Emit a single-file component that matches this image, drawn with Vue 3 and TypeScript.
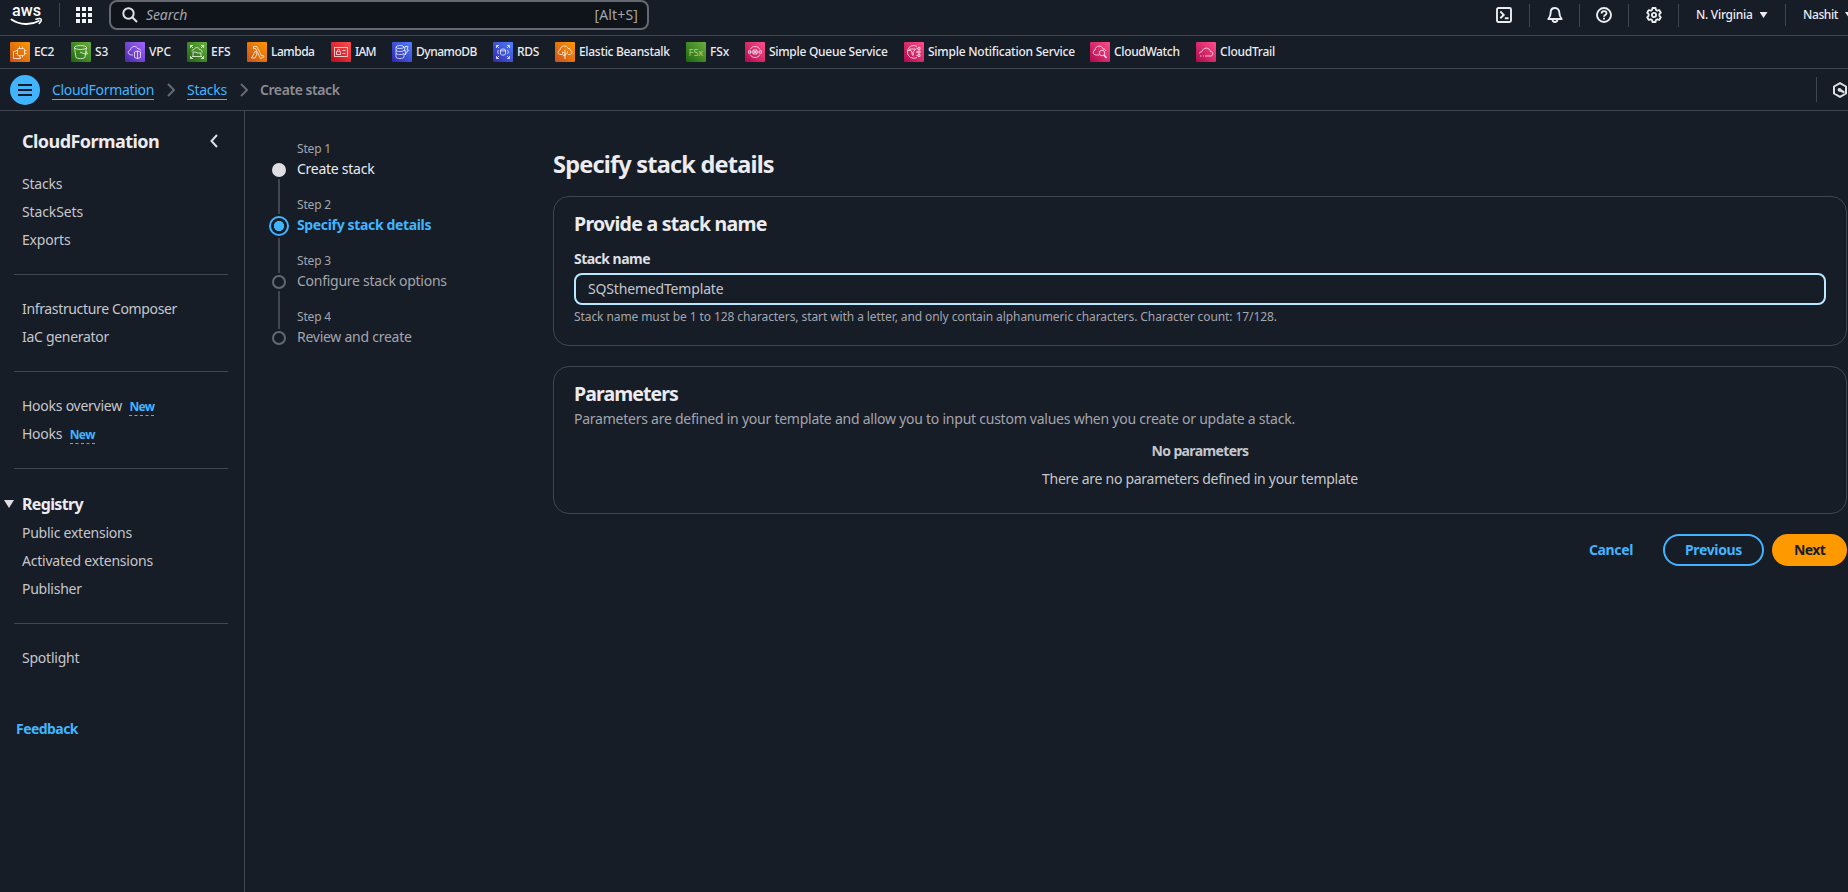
<script setup lang="ts">
interface Favorite {
  name: string
  tone: string
  icon: string
  width: number
  tracking: number
}

interface NavItem {
  label: string
  tracking: number
  isNew?: boolean
}

interface Step {
  title: string
  state: 'done' | 'active' | 'todo'
}

// width: full slot of the shortcut, up to the start of the next one
const favorites: Favorite[] = [
  { name: 'EC2', tone: 'orange', icon: 'ec2', width: 61, tracking: -0.39 },
  { name: 'S3', tone: 'green', icon: 's3', width: 54, tracking: -0.2 },
  { name: 'VPC', tone: 'purple', icon: 'vpc', width: 62, tracking: -0.1 },
  { name: 'EFS', tone: 'green', icon: 'efs', width: 60, tracking: -0.04 },
  { name: 'Lambda', tone: 'orange', icon: 'lambda', width: 84, tracking: -0.48 },
  { name: 'IAM', tone: 'red', icon: 'iam', width: 61, tracking: -0.8 },
  { name: 'DynamoDB', tone: 'blue', icon: 'dynamo', width: 101, tracking: -0.48 },
  { name: 'RDS', tone: 'blue', icon: 'rds', width: 62, tracking: -0.3 },
  { name: 'Elastic Beanstalk', tone: 'orange', icon: 'beanstalk', width: 131, tracking: -0.31 },
  { name: 'FSx', tone: 'green', icon: 'fsx', width: 59, tracking: -0.1 },
  { name: 'Simple Queue Service', tone: 'pink', icon: 'sqs', width: 159, tracking: -0.28 },
  { name: 'Simple Notification Service', tone: 'pink', icon: 'sns', width: 186, tracking: -0.24 },
  { name: 'CloudWatch', tone: 'pink', icon: 'cloudwatch', width: 106, tracking: -0.35 },
  { name: 'CloudTrail', tone: 'pink', icon: 'cloudtrail', width: 100, tracking: -0.24 },
]

const groupA: NavItem[] = [
  { label: 'Stacks', tracking: -0.2 },
  { label: 'StackSets', tracking: -0.13 },
  { label: 'Exports', tracking: -0.2 },
]
const groupB: NavItem[] = [
  { label: 'Infrastructure Composer', tracking: -0.35 },
  { label: 'IaC generator', tracking: -0.3 },
]
const groupC: NavItem[] = [
  { label: 'Hooks overview', tracking: -0.25, isNew: true },
  { label: 'Hooks', tracking: -0.25, isNew: true },
]
const registry: NavItem[] = [
  { label: 'Public extensions', tracking: -0.25 },
  { label: 'Activated extensions', tracking: -0.22 },
  { label: 'Publisher', tracking: -0.25 },
]

const steps: Step[] = [
  { title: 'Create stack', state: 'done' },
  { title: 'Specify stack details', state: 'active' },
  { title: 'Configure stack options', state: 'todo' },
  { title: 'Review and create', state: 'todo' },
]
</script>

<template>
  <div class="console">
    <header class="topbar">
      <svg class="aws" width="36" height="28" viewBox="0 0 36 28">
        <text x="2" y="16" class="aws-word" textLength="29" lengthAdjust="spacingAndGlyphs">aws</text>
        <path d="M1.500 19.500c8.500 5.800 19.500 5.800 27.300 1.500" fill="none" stroke="#fff" stroke-width="1.900" stroke-linecap="round" />
        <path d="M26 19.300c2.400-.8 4.700-.8 5.100-.2.400.8-.5 3-1.900 4.400" fill="none" stroke="#fff" stroke-width="1.500" stroke-linecap="round" />
      </svg>
      <span class="rule logo-rule"></span>
      <svg class="apps" width="16" height="16" viewBox="0 0 16 16" fill="#f3f3f7">
        <template v-for="r in 3" :key="r">
          <rect v-for="c in 3" :key="c" :x="(c - 1) * 6" :y="(r - 1) * 6" width="4" height="4" />
        </template>
      </svg>
      <div class="search">
        <svg width="16" height="16" viewBox="0 0 16 16" fill="none" stroke="#dedee3" stroke-width="2">
          <circle cx="6.500" cy="6.500" r="5.200" />
          <path d="M10.300 10.300 15 15" />
        </svg>
        <em>Search</em>
        <span class="keys">[Alt+S]</span>
      </div>
      <div class="tools">
        <span class="tool"><svg viewBox="0 0 16 16"><rect x="1" y="1" width="14" height="14" rx="1.500" /><path d="m4.300 4.500 3.400 3.400-3.400 3.300M8.800 11.200h3.800" /></svg></span>
        <span class="tool"><svg viewBox="0 0 16 16"><path d="M8 1C5.300 1 3.700 3 3.700 5.500 3.700 8.700 3 10 1.300 12h13.400c-1.700-2-2.400-3.300-2.400-6.500C12.300 3 10.700 1 8 1Z" stroke-linejoin="round" /><path d="M5.500 12.500a2.500 2.500 0 0 0 5 0" /></svg></span>
        <span class="tool"><svg viewBox="0 0 16 16"><circle cx="8" cy="8" r="7" /><path d="M5.600 6.500C5.600 3.300 10.500 3.400 10.500 6.200 10.500 8 8 7.900 8 9.700M8 10.700v1.800" /></svg></span>
        <span class="tool"><svg viewBox="0 0 16 16"><path d="M6.500 1h3l.5 2 1.200.7 2-.6 1.600 2.600L13.400 7.200v1.600l1.400 1.500-1.600 2.600-2-.6-1.200.7-.5 2h-3L6 13l-1.200-.7-2 .6-1.600-2.600 1.400-1.500V7.200L1.200 5.700l1.600-2.600 2 .6L6 3Z" stroke-linejoin="round" /><circle cx="8" cy="8" r="2.100" /></svg></span>
        <span class="menu region">N. Virginia<i class="caret"></i></span>
        <span class="menu user">Nashit<i class="caret"></i></span>
      </div>
    </header>

    <nav class="favorites">
      <a v-for="f in favorites" :key="f.name" class="fav" :style="{ width: f.width + 'px', letterSpacing: f.tracking + 'px' }">
        <span class="tile" :class="f.tone">
          <svg viewBox="0 0 20 20">
            <g v-if="f.icon === 'ec2'"><rect x="7.500" y="6.500" width="7" height="7" rx="1" /><path d="M9.500 4.500v2M12.500 4.500v2M9.500 13.500v2M12.500 13.500v2M5.500 8.500h2M5.500 11.500h2M14.500 8.500h2M14.500 11.500h2M5.500 9.500h-2v7h7v-2" /></g>
            <g v-else-if="f.icon === 's3'"><ellipse cx="9.500" cy="5.500" rx="6" ry="2" /><path d="m3.500 5.500 1.500 10c1.500 1.500 7.500 1.500 9 0l1.500-10M9 10c3 1.500 7.500 3 7.500 1.500 0-.8-1-1.500-2-2" /></g>
            <g v-else-if="f.icon === 'vpc'"><path d="M8 13H6.500C2 12.500 2.500 8.500 5.500 8c.5-4.500 6.500-4.500 7.500-1 1.500-.5 2.500.5 2.500 1.500M9.500 10l3-1 3 1v5.500l-3 1-3-1ZM12.500 9v7.500" /></g>
            <g v-else-if="f.icon === 'efs'"><path d="M3.500 6V3.500H6M3.500 3.500 6 6M14 3.500h2.500V6M16.500 3.500 14 6M3.500 14v2.500H6M3.500 16.500 6 14M14 16.500h2.500V14M16.500 16.500 14 14M6 10h3l1 1h4v3.500H6ZM5 9.500C4.500 7.500 7 7.500 7 7.500c1-2.500 5-2.500 5.500 0 2 0 3 1.500 2.500 3" /></g>
            <g v-else-if="f.icon === 'lambda'"><path d="M6.500 4.500h3.300l4.800 9.500 1.700-.6.7 1.600-3.500 1.500L8.500 6.500h-2ZM8.500 9 10 12l-2 4H4.500Z" /></g>
            <g v-else-if="f.icon === 'iam'"><rect x="3.500" y="5.500" width="13" height="9" /><path d="M5.500 9.500h4v3h-4ZM6.500 9V8c0-1 2-1 2 0v1M11.500 8.500h3M11.500 11.500h3" /></g>
            <g v-else-if="f.icon === 'dynamo'"><ellipse cx="8" cy="5" rx="4" ry="1.500" /><path d="M4 5v10c0 2 8 2 8 0v-3M4 8c0 2 8 2 8 0M4 11c0 2 8 2 8 0M12 5v1M13 4.500h3l-1 3.500h1.500L13 13l1-4h-1.500Z" /></g>
            <g v-else-if="f.icon === 'rds'"><path d="M3.500 6V3.500H6M3.500 3.500 6 6M14 3.500h2.500V6M16.500 3.500 14 6M3.500 14v2.500H6M3.500 16.500 6 14M14 16.500h2.500V14M16.500 16.500 14 14M5.500 8c-1 1.500-1 2.500 0 4M14.500 8c1 1.500 1 2.500 0 4" /><ellipse cx="10" cy="8" rx="2.500" ry="1" /><path d="M7.500 8v4c0 1.500 5 1.500 5 0V8" /></g>
            <g v-else-if="f.icon === 'beanstalk'"><path d="M7 12.500H6C2 12.500 2.500 8.500 5 8c.5-5 7-5 8-1.500 1.500-.5 2 .5 2 1.500 3 1 2.500 4.500-.5 4.500H13M10 7.500V17M10 14c-2.500 0-2.500-2-2.500-4 2.500 0 2.500 2 2.500 4ZM10 12.500c2.500 0 2.500-2 2.500-3.500" /></g>
            <text v-else-if="f.icon === 'fsx'" x="2.800" y="14" class="fsx-word" textLength="14.200" lengthAdjust="spacingAndGlyphs">FSx</text>
            <g v-else-if="f.icon === 'sqs'"><path d="M5 7.500c2-4 8-4 10 0M5 12.500c2 4 8 4 10 0M3.500 8.800h2v2.400h-2ZM14.500 8.800h2v2.400h-2ZM8 8h4v4H8ZM8 8l4 4M12 8l-4 4M5.500 10H8M12 10h2.500" /></g>
            <g v-else-if="f.icon === 'sns'"><path d="M13 4.500C8 2 3.500 5 3.500 10s5 7.500 9.500 5.500M3.500 8.500h3M5.500 7h6l-2.300 3v3.500l-1.200-1V10ZM14 5.500h2v2h-2ZM14 9h2v2h-2ZM14 12.500h2v2h-2ZM12.500 6.500H14M12 10h2M12.500 13.500H14" /></g>
            <g v-else-if="f.icon === 'cloudwatch'"><path d="M9 13H6.500C2.500 13 2.500 9 5 8c.5-5 7.500-5 8-1 2-.3 3 1 2.500 2" /><circle cx="12" cy="11" r="2.800" /><path d="m14 13 2.500 3" stroke-width="1.500" /></g>
            <g v-else><path d="M9 14h6c2.500-.5 2.500-4-.5-4.500C13.500 5 7 5 6 9.500c-1.500.3-2.500 1-2.500 2M4 14h1.500M7 14h.8" /></g>
          </svg>
        </span>
        <span class="fav-name">{{ f.name }}</span>
      </a>
    </nav>

    <div class="crumbs">
      <button class="burger" type="button"><i></i><i></i><i></i></button>
      <a class="crumb link first">CloudFormation</a>
      <svg class="sep" width="8" height="14" viewBox="0 0 8 14"><path d="m1 1 6 6-6 6" /></svg>
      <a class="crumb link second">Stacks</a>
      <svg class="sep" width="8" height="14" viewBox="0 0 8 14"><path d="m1 1 6 6-6 6" /></svg>
      <span class="crumb current">Create stack</span>
      <span class="assist">
        <svg width="16" height="16" viewBox="0 0 16 16"><path d="M8 1.100 14 4.500v7L8 14.900 2 11.500v-7Z" fill="none" stroke="#dedee3" stroke-width="2" stroke-linejoin="round" /><path d="M7 7.500 11.500 10" stroke="#dedee3" stroke-width="2.500" stroke-linecap="round" /><circle cx="7.600" cy="7.800" r="1.900" fill="#dedee3" /></svg>
      </span>
    </div>

    <div class="body">
      <aside class="sidebar">
        <div class="side-head">
          <h2>CloudFormation</h2>
          <svg width="8" height="14" viewBox="0 0 8 14"><path d="M7 1 1.500 7 7 13" fill="none" stroke="#dedee3" stroke-width="2" /></svg>
        </div>
        <ul class="links">
          <li v-for="n in groupA" :key="n.label"><span :style="{ letterSpacing: n.tracking + 'px' }">{{ n.label }}</span></li>
        </ul>
        <hr />
        <ul class="links">
          <li v-for="n in groupB" :key="n.label"><span :style="{ letterSpacing: n.tracking + 'px' }">{{ n.label }}</span></li>
        </ul>
        <hr />
        <ul class="links">
          <li v-for="n in groupC" :key="n.label">
            <span :style="{ letterSpacing: n.tracking + 'px' }">{{ n.label }}</span><b v-if="n.isNew" class="new">New</b>
          </li>
        </ul>
        <hr />
        <h3 class="section"><i class="caret big"></i>Registry</h3>
        <ul class="links">
          <li v-for="n in registry" :key="n.label"><span :style="{ letterSpacing: n.tracking + 'px' }">{{ n.label }}</span></li>
        </ul>
        <hr />
        <ul class="links"><li>Spotlight</li></ul>
        <a class="feedback">Feedback</a>
      </aside>

      <ol class="steps">
        <li v-for="(s, i) in steps" :key="s.title" :class="s.state">
          <div class="rail"><span class="dot"></span><span v-if="i < steps.length - 1" class="line"></span></div>
          <div class="step-text">
            <small>Step {{ i + 1 }}</small>
            <span class="step-title">{{ s.title }}</span>
          </div>
        </li>
      </ol>

      <main class="content">
        <h1>Specify stack details</h1>
        <section class="card name-card">
          <h2>Provide a stack name</h2>
          <label class="label" for="stack">Stack name</label>
          <input id="stack" class="field" value="SQSthemedTemplate" />
          <p class="hint">Stack name must be 1 to 128 characters, start with a letter, and only contain alphanumeric characters. Character count: 17/128.</p>
        </section>
        <section class="card params-card">
          <h2 class="params-title">Parameters</h2>
          <p class="desc">Parameters are defined in your template and allow you to input custom values when you create or update a stack.</p>
          <p class="empty-title">No parameters</p>
          <p class="empty-text">There are no parameters defined in your template</p>
        </section>
        <div class="actions">
          <button type="button" class="btn cancel">Cancel</button>
          <button type="button" class="btn previous">Previous</button>
          <button type="button" class="btn next">Next</button>
        </div>
      </main>
    </div>
  </div>
</template>

<style>
html,
body {
  background: #161d26;
  overflow: hidden;
}
</style>

<style scoped>
.console {
  display: flex;
  flex-direction: column;
  width: 1848px;
  height: 892px;
  overflow: hidden;
  background: #161d26;
  color: #c6c6cd;
  font: 400 14px/20px 'Noto Sans', 'Open Sans', sans-serif;
}
.console * {
  box-sizing: border-box;
}
h1, h2, h3, p, ul, ol {
  margin: 0;
  padding: 0;
  list-style: none;
}

/* top bar */
.topbar {
  display: flex;
  flex: none;
  height: 36px;
  border-bottom: 1px solid #424650;
}
.aws {
  flex: none;
  margin: 0 0 0 10px;
}
.aws-word {
  fill: #fff;
  font: 500 17px Roboto, 'Noto Sans', sans-serif;
}
.rule {
  flex: none;
  width: 1px;
  background: #424650;
}
.logo-rule {
  height: 24px;
  margin: 3px 0 0 13px;
}
.apps {
  flex: none;
  margin: 7px 0 0 16px;
}
.search {
  display: flex;
  flex: none;
  align-items: center;
  width: 540px;
  height: 30px;
  margin-left: 17px;
  padding: 0 9px 0 11px;
  border: 2px solid #656871;
  border-radius: 8px;
  background: #0f141a;
  color: #a4a4ad;
}
.search em {
  margin-left: 8px;
  letter-spacing: -0.1px;
}
.keys {
  margin-left: auto;
  letter-spacing: 0.14px;
}
.tools {
  display: flex;
  flex: none;
  align-items: center;
  height: 30px;
  margin-left: 830px;
}
.tool {
  display: flex;
  flex: none;
  align-items: center;
  justify-content: center;
  width: 50px;
  height: 23px;
  border-right: 1px solid #424650;
}
.tool:first-child {
  width: 51px;
}
.tool:nth-child(3) {
  width: 49px;
}
.tool svg {
  width: 16px;
  height: 16px;
  fill: none;
  stroke: #ebebf0;
  stroke-width: 1.9;
}
.menu {
  display: flex;
  flex: none;
  align-items: center;
  height: 22px;
  color: #ebebf0;
  font-size: 12px;
  font-weight: 500;
  letter-spacing: -0.28px;
}
.region {
  width: 107px;
  padding-left: 17px;
  border-right: 1px solid #424650;
}
.user {
  padding-left: 17px;
  letter-spacing: -0.4px;
}
.caret {
  width: 8px;
  height: 6px;
  margin-left: 7px;
  background: #ebebf0;
  clip-path: polygon(0 0, 100% 0, 50% 100%);
}

/* favorites */
.favorites {
  display: flex;
  flex: none;
  align-items: center;
  height: 33px;
  padding: 0 0 1px 10px;
  border-bottom: 1px solid #424650;
}
.fav {
  display: flex;
  flex: none;
  align-items: center;
  gap: 4px;
  color: #ebebf0;
  font-size: 12px;
  font-weight: 500;
  white-space: nowrap;
}
.tile {
  width: 20px;
  height: 20px;
  border-radius: 1px;
}
.tile svg {
  display: block;
  width: 20px;
  height: 20px;
  fill: none;
  stroke: #fff;
  stroke-width: 0.8;
  stroke-opacity: 0.9;
}
.tile .fsx-word {
  fill: #d8ecc8;
  stroke: none;
  font: 300 9.5px 'Noto Sans', sans-serif;
  letter-spacing: 0;
}
.orange { background: linear-gradient(45deg, #c8511b, #ff9900); }
.green { background: linear-gradient(45deg, #1b660f, #6cae3e); }
.purple { background: linear-gradient(45deg, #4d27a8, #a166ff); }
.red { background: linear-gradient(45deg, #bd0816, #ff5252); }
.blue { background: linear-gradient(45deg, #2e27ad, #527fff); }
.pink { background: linear-gradient(45deg, #b0084d, #ff4f8b); }

/* breadcrumbs */
.crumbs {
  display: flex;
  flex: none;
  align-items: center;
  height: 42px;
  padding-left: 10px;
  border-bottom: 1px solid #424650;
}
.burger {
  display: flex;
  flex-direction: column;
  align-items: center;
  justify-content: center;
  gap: 3px;
  width: 30px;
  height: 30px;
  padding: 0;
  border: 0;
  border-radius: 50%;
  background: #42b4ff;
}
.burger i {
  width: 14px;
  height: 2px;
  background: #161d26;
}
.crumb {
  line-height: 18px;
  white-space: nowrap;
}
.link {
  border-bottom: 1px solid #42b4ff;
  color: #42b4ff;
}
.first {
  width: 102px;
  margin: 1px 13px 0 12px;
  letter-spacing: -0.32px;
}
.second {
  width: 40px;
  margin: 1px 13px 0 12px;
  letter-spacing: -0.25px;
}
.current {
  margin-left: 12px;
  color: #8c8c94;
  font-weight: 600;
  letter-spacing: -0.43px;
}
.sep {
  fill: none;
  stroke: #656871;
  stroke-width: 2;
}
.assist {
  display: flex;
  flex: none;
  align-items: center;
  width: 32px;
  height: 25px;
  margin-left: auto;
  padding-left: 15px;
  border-left: 1px solid #424650;
}
.assist svg {
  flex: none;
}

/* layout */
.body {
  display: flex;
  flex: 1;
}
.sidebar {
  flex: none;
  width: 245px;
  border-right: 1px solid #424650;
}
.side-head {
  display: flex;
  align-items: center;
  justify-content: space-between;
  height: 24px;
  margin: 18px 26px 17px 22px;
}
.side-head h2 {
  color: #ebebf0;
  font-size: 18px;
  font-weight: 700;
  line-height: 24px;
  letter-spacing: -0.56px;
}
.links {
  padding-left: 22px;
}
.links li {
  height: 28px;
  padding: 4px 0;
  line-height: 20px;
  letter-spacing: -0.22px;
}
.sidebar hr {
  height: 1px;
  margin: 20px 16px 20px 14px;
  border: 0;
  background: #424650;
}
.new {
  display: inline-block;
  margin-left: 7.5px;
  border-bottom: 1px dashed #42b4ff;
  color: #42b4ff;
  font-size: 12px;
  font-weight: 700;
  line-height: 16px;
  letter-spacing: -0.65px;
}
.section {
  display: flex;
  align-items: center;
  height: 30px;
  padding-left: 4px;
  color: #ebebf0;
  font-size: 16px;
  font-weight: 700;
  letter-spacing: -0.65px;
}
.caret.big {
  width: 10px;
  height: 8px;
  margin: 0 8px 0 0;
  background: #dedee3;
}
.feedback {
  display: block;
  margin: 47px 0 0 16px;
  color: #42b4ff;
  font-weight: 700;
  letter-spacing: -0.55px;
}

/* steps */
.steps {
  flex: none;
  width: 308px;
  padding: 30px 0 0 24px;
}
.steps li {
  display: flex;
  height: 56px;
}
.rail {
  display: flex;
  flex-direction: column;
  align-items: center;
  width: 20px;
  height: 56px;
  padding-top: 22px;
}
.dot {
  flex: none;
  width: 14px;
  height: 14px;
  border: 2px solid #656871;
  border-radius: 50%;
}
.done .dot {
  border-color: #dedee3;
  background: #dedee3;
}
.active .rail {
  padding-top: 19px;
}
.active .dot {
  width: 20px;
  height: 20px;
  border-color: #42b4ff;
  background: radial-gradient(circle, #42b4ff 4.8px, transparent 5.4px);
}
.line {
  flex: none;
  width: 2px;
  height: 35px;
  margin-top: 2px;
  background: #424650;
}
.todo .line {
  height: 38px;
}
.step-text {
  display: flex;
  flex-direction: column;
  padding-left: 8px;
}
.step-text small {
  height: 18px;
  color: #a4a4ad;
  font-size: 12px;
  line-height: 16px;
  letter-spacing: -0.18px;
}
.step-title {
  color: #a4a4ad;
  letter-spacing: -0.26px;
}
.done .step-title {
  color: #ebebf0;
}
.active .step-title {
  color: #42b4ff;
  font-weight: 700;
  letter-spacing: -0.35px;
}

/* main content */
.content {
  flex: none;
  width: 1294px;
}
h1 {
  margin-top: 37px;
  color: #ebebf0;
  font-size: 23.5px;
  font-weight: 700;
  line-height: 32px;
  letter-spacing: -0.79px;
}
.card {
  border: 1px solid #424650;
  border-radius: 16px;
  padding: 0 20px;
}
.card h2 {
  color: #ebebf0;
  font-size: 19.5px;
  font-weight: 700;
  line-height: 24px;
  letter-spacing: -0.72px;
}
.name-card {
  height: 150px;
  margin-top: 16px;
  padding-top: 15px;
}
.label {
  display: block;
  margin-top: 13px;
  color: #dedee3;
  font-weight: 700;
  letter-spacing: -0.52px;
}
.field {
  display: block;
  width: 1252px;
  height: 32px;
  margin-top: 4px;
  padding: 0 12px 2px;
  border: 2px solid #b8e7ff;
  border-radius: 8px;
  outline: 0;
  background: #161d26;
  color: #c6c6cd;
  font: inherit;
  letter-spacing: -0.17px;
}
.hint {
  margin-top: 4px;
  color: #a4a4ad;
  font-size: 12px;
  line-height: 16px;
  letter-spacing: -0.087px;
  white-space: nowrap;
}
.params-card {
  height: 148px;
  margin-top: 20px;
  padding-top: 15px;
}
.card .params-title {
  letter-spacing: -0.91px;
}
.desc {
  margin-top: 3px;
  color: #a4a4ad;
  letter-spacing: -0.244px;
}
.empty-title {
  margin-top: 12px;
  font-weight: 700;
  letter-spacing: -0.62px;
  text-align: center;
}
.empty-text {
  margin-top: 8px;
  letter-spacing: -0.28px;
  text-align: center;
}
.actions {
  display: flex;
  justify-content: flex-end;
  gap: 8px;
  margin-top: 20px;
}
.btn {
  height: 32px;
  padding: 0;
  border: 0;
  border-radius: 16px;
  background: none;
  color: #42b4ff;
  font: 700 14px/20px 'Noto Sans', sans-serif;
  letter-spacing: -0.36px;
}
.cancel {
  width: 88px;
}
.previous {
  width: 101px;
  border: 2px solid #42b4ff;
}
.next {
  width: 75px;
  background: #ff9900;
  color: #161d26;
  letter-spacing: -0.6px;
}
</style>
